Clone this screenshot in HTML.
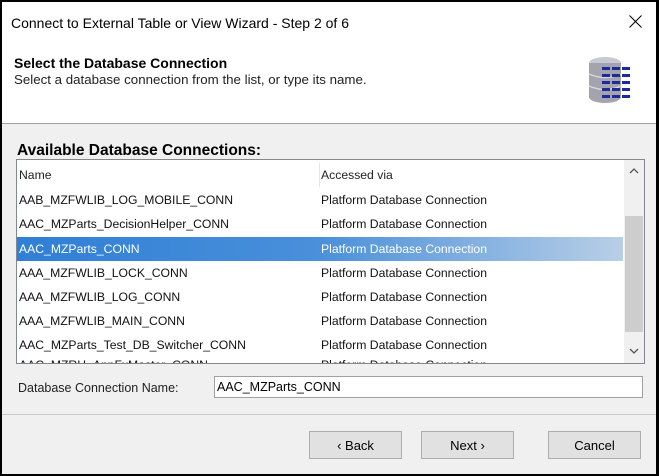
<!DOCTYPE html>
<html><head><style>
body{margin:0;width:659px;height:476px;overflow:hidden;background:#000;font-family:"Liberation Sans",sans-serif;}
#w{position:absolute;left:2px;top:2px;width:654px;height:472px;background:#f0f0f0;overflow:hidden;}
#hdr{position:absolute;left:0;top:0;width:654px;height:121px;background:#fff;border-bottom:1px solid #a0a0a0;}
.t{position:absolute;white-space:nowrap;font-size:13px;color:#000;}
#list{position:absolute;left:14px;top:157px;width:627px;height:203px;background:#fff;border:1px solid #828790;overflow:hidden;}
.row{position:absolute;left:0;width:606px;height:24px;font-size:12.2px;line-height:24px;color:#111;}
.row span{position:absolute;white-space:nowrap;}
.c1{left:2px}.c2{left:304px}
.sel{background:linear-gradient(to right,#2f7fd6 0%,#4a90da 50%,#b9cfe6 100%);color:#fff;}
#sb{position:absolute;left:607px;top:0;width:20px;height:203px;background:#f0f0f0;}
#thumb{position:absolute;left:1px;top:56px;width:18px;height:116px;background:#cdcdcd;}
.btn{position:absolute;top:429px;height:28px;width:90px;background:#e1e1e1;border:1px solid #adadad;font-size:13px;line-height:28px;text-align:center;box-sizing:border-box;}
</style></head><body>
<div id="w">
<div id="hdr">
<div class="t" style="left:9px;top:13px;font-size:14px;">Connect to External Table or View Wizard - Step 2 of 6</div>
<svg style="position:absolute;left:627px;top:13px" width="13" height="13" viewBox="0 0 13 13"><path d="M0.5 0.5L12.5 12.5M12.5 0.5L0.5 12.5" stroke="#000" stroke-width="1"/></svg>
<div class="t" style="left:12px;top:53px;font-weight:bold;font-size:14px;">Select the Database Connection</div>
<div class="t" style="left:12px;top:70px;font-size:13.3px;color:#222;">Select a database connection from the list, or type its name.</div>
<svg style="position:absolute;left:586px;top:54px" width="46" height="52" viewBox="0 0 46 52">
<ellipse cx="17" cy="7" rx="16" ry="6" fill="#c9c9d1"/>
<rect x="1" y="7" width="32" height="34" fill="#a4a4ae"/>
<ellipse cx="17" cy="41" rx="16" ry="6" fill="#a4a4ae"/>
<path d="M1 18 q16 7 32 0 M1 30 q16 7 32 0" stroke="#d8d8e0" stroke-width="1.5" fill="none"/>
<g fill="#1c2a9c">
<rect x="14" y="11" width="8" height="3"/><rect x="24" y="11" width="8" height="3"/><rect x="34" y="11" width="8" height="3"/>
<rect x="14" y="18" width="8" height="3"/><rect x="24" y="18" width="8" height="3"/><rect x="34" y="18" width="8" height="3"/>
<rect x="14" y="25" width="8" height="3"/><rect x="24" y="25" width="8" height="3"/><rect x="34" y="25" width="8" height="3"/>
<rect x="14" y="32" width="8" height="3"/><rect x="24" y="32" width="8" height="3"/><rect x="34" y="32" width="8" height="3"/>
<rect x="14" y="39" width="8" height="3"/><rect x="24" y="39" width="8" height="3"/><rect x="34" y="39" width="8" height="3"/>
</g></svg>
</div>
<div class="t" style="left:15px;top:140px;font-weight:bold;font-size:15.5px;">Available Database Connections:</div>
<div id="list">
<div class="row" style="top:3px;color:#222"><span class="c1">Name</span><span class="c2">Accessed via</span></div>
<div style="position:absolute;left:302px;top:3px;width:1px;height:24px;background:#e5e5e5"></div>
<div class="row" style="top:28px"><span class="c1">AAB_MZFWLIB_LOG_MOBILE_CONN</span><span class="c2">Platform Database Connection</span></div>
<div class="row" style="top:52px"><span class="c1">AAC_MZParts_DecisionHelper_CONN</span><span class="c2">Platform Database Connection</span></div>
<div class="row sel" style="top:77px"><span class="c1">AAC_MZParts_CONN</span><span class="c2">Platform Database Connection</span></div>
<div class="row" style="top:101px"><span class="c1">AAA_MZFWLIB_LOCK_CONN</span><span class="c2">Platform Database Connection</span></div>
<div class="row" style="top:125px"><span class="c1">AAA_MZFWLIB_LOG_CONN</span><span class="c2">Platform Database Connection</span></div>
<div class="row" style="top:149px"><span class="c1">AAA_MZFWLIB_MAIN_CONN</span><span class="c2">Platform Database Connection</span></div>
<div class="row" style="top:173px"><span class="c1">AAC_MZParts_Test_DB_Switcher_CONN</span><span class="c2">Platform Database Connection</span></div>
<div class="row" style="top:193px"><span class="c1">AAC_MZRH_AppFxMaster_CONN</span><span class="c2">Platform Database Connection</span></div>
<div id="sb"><div id="thumb"></div>
<svg style="position:absolute;left:5px;top:8px" width="10" height="6"><path d="M1 5L5 1L9 5" stroke="#555" stroke-width="1.3" fill="none"/></svg>
<svg style="position:absolute;left:5px;top:188px" width="10" height="6"><path d="M1 1L5 5L9 1" stroke="#555" stroke-width="1.3" fill="none"/></svg>
</div>
</div>
<div class="t" style="left:16px;top:379px;color:#222;font-size:12.5px">Database Connection Name:</div>
<div style="position:absolute;left:212px;top:374px;width:429px;height:22px;background:#fff;border:1px solid #a0a0a0;box-sizing:border-box;font-size:12.5px;line-height:20px;padding-left:2px;">AAC_MZParts_CONN</div>
<div style="position:absolute;left:0;top:412px;width:654px;height:1px;background:#c8c8c8"></div>
<div class="btn" style="left:307px;width:93px;">&lsaquo; Back</div>
<div class="btn" style="left:419px;width:93px;">Next &rsaquo;</div>
<div class="btn" style="left:546px;width:93px;">Cancel</div>
</div>
</body></html>
